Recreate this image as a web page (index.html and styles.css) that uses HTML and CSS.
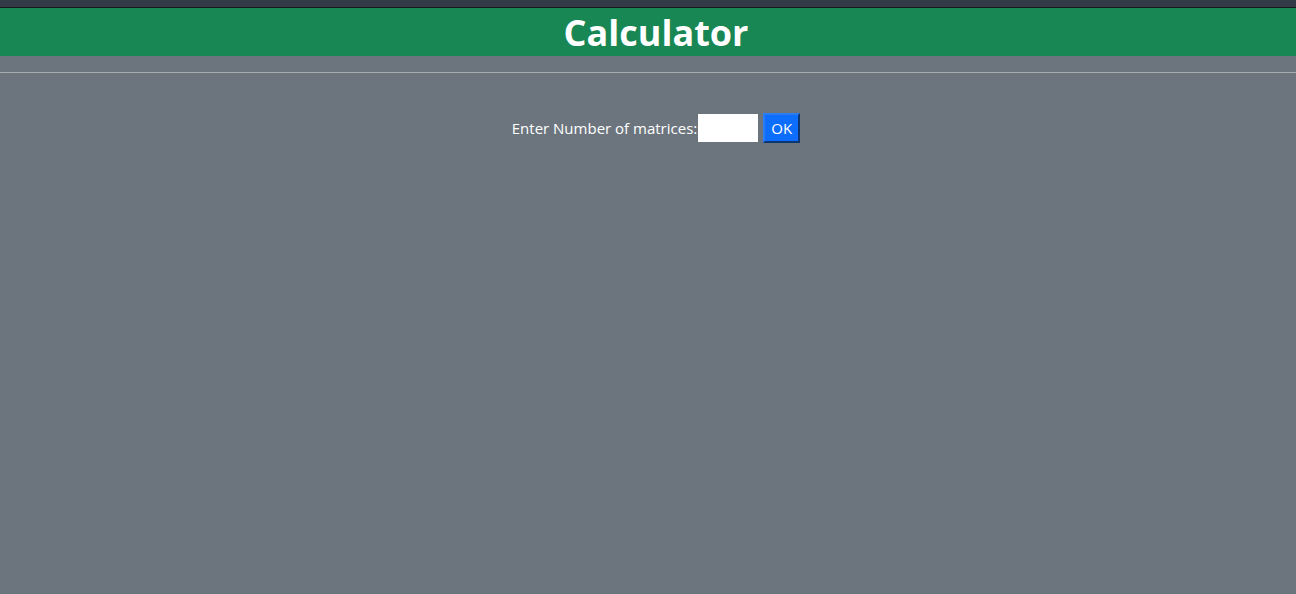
FILE: index.html
```html
<!DOCTYPE html>
<html>
<head>
<meta charset="utf-8">
<link rel="stylesheet" href="styles.css">
</head>
<body>
<div class="topbar"></div>
<header class="header"><h1 class="title">Calculator</h1></header>
<hr class="rule">
<main class="content">
  <div class="row">
    <label class="label" for="n">Enter Number of matrices:</label><input class="num" id="n" type="text"><button class="ok">OK</button>
  </div>
</main>
</body>
</html>
```
FILE: styles.css
```css
html, body {
  margin: 0;
  padding: 0;
  height: 100%;
}
body {
  background: #6c757d;
  font-family: "Open Sans", "Noto Sans", sans-serif;
  color: #fff;
  overflow: hidden;
}
.topbar {
  height: 7px;
  background: #343b48;
  border-bottom: 1px solid #15181c;
}
.header {
  height: 48px;
  box-sizing: border-box;
  padding-top: 2px;
  background: #198754;
  display: flex;
  align-items: center;
  justify-content: center;
  padding-left: 16px;
}
.title {
  margin: 0;
  font-size: 36px;
  font-weight: 700;
  line-height: 46px;
  color: #fff;
}
.rule {
  margin: 16px 0 0 0;
  border: 0;
  border-top: 1px solid #a7acb1;
  height: 0;
}
.content {
  padding-top: 40px;
  padding-left: 16px;
}
.row {
  display: flex;
  justify-content: center;
  align-items: center;
}
.label {
  font-size: 15px;
}
.num {
  width: 60px;
  height: 28px;
  box-sizing: border-box;
  border: 0;
  background: #fff;
  margin: 0 0 0 1px;
  padding: 0;
}
.ok {
  margin-left: 5px;
  width: 37px;
  height: 30px;
  box-sizing: border-box;
  background: #0d6efd;
  color: #fff;
  border: 2px outset #1a5fc4;
  border-top-color: #2a7cf5;
  border-left-color: #2a7cf5;
  font-family: "Open Sans", "Noto Sans", sans-serif;
  font-size: 15px;
  padding: 0;
}
```
